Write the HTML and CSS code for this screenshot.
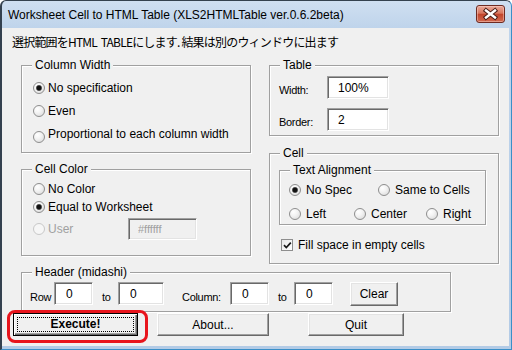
FILE: index.html
```html
<!DOCTYPE html>
<html lang="ja">
<head>
  <meta charset="UTF-8">
  <link rel="stylesheet" href="styles.css">
</head>
<body>

  <div class="window">
    <div class="titlebar">
      <span class="title">Worksheet Cell to HTML Table (XLS2HTMLTable ver.0.6.2beta)</span>
      <span class="close-btn">
        <svg width="29" height="18" viewBox="0 0 29 18">
          <g stroke-linecap="square">
            <path d="M10 5.5 L19 12.5 M19 5.5 L10 12.5" stroke="#4a1d16" stroke-width="4.4" />
            <path d="M10 5.5 L19 12.5 M19 5.5 L10 12.5" stroke="#ffffff" stroke-width="2.4" />
          </g>
        </svg>
      </span>
    </div>

    <div class="client">
      <p class="intro">選択範囲をHTML&nbsp; TABLEにします. 結果は別のウィンドウに出ます</p>

      <div class="groups">
        <div class="col">
          <fieldset class="group colwidth">
            <legend>Column Width</legend>
            <div class="opts">
              <div class="opt"><span class="radio checked"></span>No specification</div>
              <div class="opt"><span class="radio"></span>Even</div>
              <div class="opt"><span class="radio low"></span>Proportional to each column width</div>
            </div>
          </fieldset>

          <fieldset class="group cellcolor">
            <legend>Cell Color</legend>
            <div class="opts">
              <div class="opt short"><span class="radio"></span>No Color</div>
              <div class="opt short"><span class="radio checked"></span>Equal to Worksheet</div>
              <div class="opt user">
                <span class="radio disabled"></span>
                <span class="user-label">User</span>
                <input class="field disabled color-field" type="text" value="#ffffff" readonly>
              </div>
            </div>
          </fieldset>
        </div>

        <div class="col">
          <fieldset class="group table">
            <legend>Table</legend>
            <div class="trows">
              <div class="trow">
                <span class="lbl tlbl">Width:</span>
                <input class="field tfield" type="text" value="100%" readonly>
              </div>
              <div class="trow">
                <span class="lbl tlbl">Border:</span>
                <input class="field tfield" type="text" value="2" readonly>
              </div>
            </div>
          </fieldset>

          <fieldset class="group cell">
            <legend>Cell</legend>
            <fieldset class="group align">
              <legend>Text Alignment</legend>
              <div class="arows">
                <div class="arow">
                  <div class="aopt w89"><span class="radio checked"></span>No Spec</div>
                  <div class="aopt"><span class="radio"></span>Same to Cells</div>
                </div>
                <div class="arow">
                  <div class="aopt w65"><span class="radio"></span>Left</div>
                  <div class="aopt w72"><span class="radio"></span>Center</div>
                  <div class="aopt"><span class="radio"></span>Right</div>
                </div>
              </div>
            </fieldset>
            <div class="check-row">
              <span class="checkbox">
                <svg width="11" height="11" viewBox="0 0 11 11"><path d="M2 5.2 L4.3 7.6 L8.8 2.6" fill="none" stroke="#1a1a1a" stroke-width="1.7" /></svg>
              </span>
              Fill space in empty cells
            </div>
          </fieldset>
        </div>
      </div>

      <fieldset class="group header">
        <legend>Header (midashi)</legend>
        <div class="hrow">
          <span class="lbl w24">Row</span>
          <input class="field hfield w39" type="text" value="0" readonly>
          <span class="lbl to">to</span>
          <input class="field hfield w46" type="text" value="0" readonly>
          <span class="lbl colon">Column:</span>
          <input class="field hfield w39" type="text" value="0" readonly>
          <span class="lbl to">to</span>
          <input class="field hfield w39" type="text" value="0" readonly>
          <button class="btn clear">Clear</button>
        </div>
      </fieldset>

      <div class="actions">
        <button class="btn default execute"><span class="focus">Execute!</span></button>
        <button class="btn about">About...</button>
        <button class="btn quit">Quit</button>
      </div>
    </div>

    <!-- red highlight drawn over the Execute button -->
    <div class="highlight"></div>
  </div>

</body>
</html>
```

FILE: styles.css
```css
* {
  box-sizing: border-box;
}

body {
  margin: 0;
  background: #fff;
  font-family: "Liberation Sans", Arial, sans-serif;
  font-size: 12px;
  color: #000;
}

.window {
  position: relative;
  width: 512px;
  height: 350px;
  border: 1px solid #34414f;
  border-left-width: 2px;
  border-right-color: #3a8fc8;
  border-bottom-color: #3a8fc8;
  border-radius: 6px 6px 0 0;
  background: linear-gradient(#cfdff1, #bfd4eb 27px, #b3cbe6);
  overflow: hidden;
}

.titlebar {
  display: flex;
  align-items: center;
  height: 27px;
  padding: 0 6px;
}

.title {
  flex: 1;
  white-space: nowrap;
}

.close-btn {
  align-self: flex-start;
  margin-top: 4px;
  width: 29px;
  height: 18px;
  border: 1px solid #6e2b22;
  border-radius: 3px;
  background: linear-gradient(#eaa899, #d8775f 45%, #c2452c 52%, #d16a50);
  box-shadow: inset 0 0 0 1px rgba(255, 220, 210, 0.45);
}

.close-btn svg {
  display: block;
  margin: -1px 0 0 -1px;
}

.client {
  height: 318px;
  margin-right: 2px;
  padding: 6px 0 0 10px;
  background: #f0f0f0;
}

.intro {
  margin: 0;
  height: 16px;
  line-height: 16px;
  font-family: "Noto Sans CJK JP", sans-serif;
  font-size: 12px;
  letter-spacing: -0.8px;
  white-space: nowrap;
}

.groups {
  display: grid;
  grid-template-columns: 230px 230px;
  column-gap: 18px;
  align-items: start;
  margin: 8px 0 0 9px;
}

.col {
  display: flex;
  flex-direction: column;
}

/* group box */
.group {
  margin: 0;
  padding: 0;
  min-width: 0;
  border: 1px solid #a0a0a0;
  box-shadow: 1px 1px 0 #fff, inset 1px 1px 0 #fff;
}

.group legend {
  margin-left: 10px;
  padding: 0 3px;
  height: 14px;
  line-height: 14px;
  background: #f0f0f0;
}

.colwidth { height: 95px; }
.cellcolor { height: 94px; margin-top: 9px; }
.table { height: 78px; }
.cell { height: 118px; margin-top: 10px; }

.opts {
  padding: 4px 0 0 11px;
}

.opt {
  display: flex;
  align-items: center;
  height: 23px;
}

.opt.short {
  height: 18px;
}

.opt.user {
  height: 22px;
  margin-top: 2px;
  color: #a0a0a0;
}

.user-label {
  width: 80px;
}

/* radio and checkbox */
.radio {
  flex: none;
  width: 12px;
  height: 12px;
  margin-right: 3px;
  border: 1px solid #8e8e8e;
  border-radius: 50%;
  background: radial-gradient(circle at 35% 30%, #fff 0, #f3f3f3 40%, #d6d6d6 100%);
}

.radio.checked {
  background:
    radial-gradient(circle, #111 0, #111 2px, #777 2.8px, transparent 3.4px),
    radial-gradient(circle at 35% 30%, #fff 0, #f3f3f3 40%, #d6d6d6 100%);
}

.radio.disabled {
  border-color: #c8c8c8;
  background: #f6f6f6;
}

.radio.low {
  margin-top: 7px;
}

.checkbox {
  flex: none;
  width: 12px;
  height: 12px;
  margin-right: 5px;
  border: 1px solid #8e8e8e;
  background: linear-gradient(135deg, #e8e8e8, #fff);
}

.checkbox svg {
  display: block;
}

/* text fields */
.field {
  display: block;
  height: 23px;
  margin: 0;
  padding: 0 0 0 10px;
  border: 1px solid;
  border-color: #a0a0a0 #fff #fff #a0a0a0;
  box-shadow: inset 1px 1px 0 #696969, inset -1px -1px 0 #e3e3e3;
  background: #fff;
  font-family: "Liberation Sans", Arial, sans-serif;
  font-size: 12px;
  color: #000;
  outline: none;
}

.field.disabled {
  background: #f0f0f0;
  color: #a0a0a0;
  font-size: 11px;
}

.color-field {
  width: 69px;
  height: 22px;
  padding-left: 9px;
}

.lbl {
  flex: none;
  padding-top: 6px;
  line-height: 16px;
  font-size: 11px;
  letter-spacing: -0.3px;
}

/* table box */
.trows {
  padding: 4px 0 0 9px;
}

.trow {
  display: flex;
  height: 23px;
}

.trow + .trow {
  margin-top: 9px;
}

.tlbl {
  width: 48px;
}

.tfield {
  width: 62px;
}

/* cell box */
.align {
  width: 207px;
  height: 62px;
  margin: 3px 0 0 9px;
}

.arows {
  padding: 4px 0 0 9px;
}

.arow {
  display: flex;
  height: 18px;
}

.arow + .arow {
  margin-top: 6px;
}

.aopt {
  display: flex;
  align-items: center;
  gap: 2px;
}

.aopt .radio {
  margin-right: 3px;
}

.w89 { width: 89px; }
.w65 { width: 65px; }
.w72 { width: 72px; }

.check-row {
  display: flex;
  align-items: center;
  height: 16px;
  margin: 12px 0 0 11px;
}

/* header box */
.header {
  width: 430px;
  height: 47px;
  margin: 1px 0 0 9px;
}

.hrow {
  display: flex;
  align-items: flex-start;
  padding: 3px 0 0 8px;
}

.hrow .lbl {
  padding-top: 7px;
}

.hfield {
  padding-left: 11px;
}

.w24 { width: 24px; }
.w39 { width: 39px; }
.w46 { width: 46px; }

.to {
  width: 16px;
  margin-left: 9px;
}

.colon {
  width: 48px;
  margin-left: 18px;
}

/* buttons */
.btn {
  height: 23px;
  margin: 0;
  padding: 0;
  border: 1px solid;
  border-color: #fff #696969 #696969 #fff;
  box-shadow: inset -1px -1px 0 #a0a0a0, inset 1px 1px 0 #e3e3e3;
  background: #f0f0f0;
  font-family: "Liberation Sans", Arial, sans-serif;
  font-size: 12px;
  color: #000;
}

.clear {
  width: 48px;
  height: 24px;
  margin-left: 17px;
}

.actions {
  display: flex;
  margin: 1px 0 0 1px;
}

.execute {
  width: 125px;
  border-color: #000;
  box-shadow: inset 1px 1px 0 #fff, inset -1px -1px 0 #696969, inset -2px -2px 0 #a0a0a0;
  font-weight: bold;
}

.execute .focus {
  display: block;
  height: 15px;
  margin: 0 3px 0 3px;
  line-height: 13px;
  border: 1px dotted #000;
}

.about {
  width: 112px;
  margin-left: 19px;
}

.quit {
  width: 96px;
  margin-left: 39px;
}

.highlight {
  position: absolute;
  left: 5px;
  top: 309px;
  width: 141px;
  height: 33px;
  border: 3px solid #e8141c;
  border-radius: 8px;
  pointer-events: none;
}
```
